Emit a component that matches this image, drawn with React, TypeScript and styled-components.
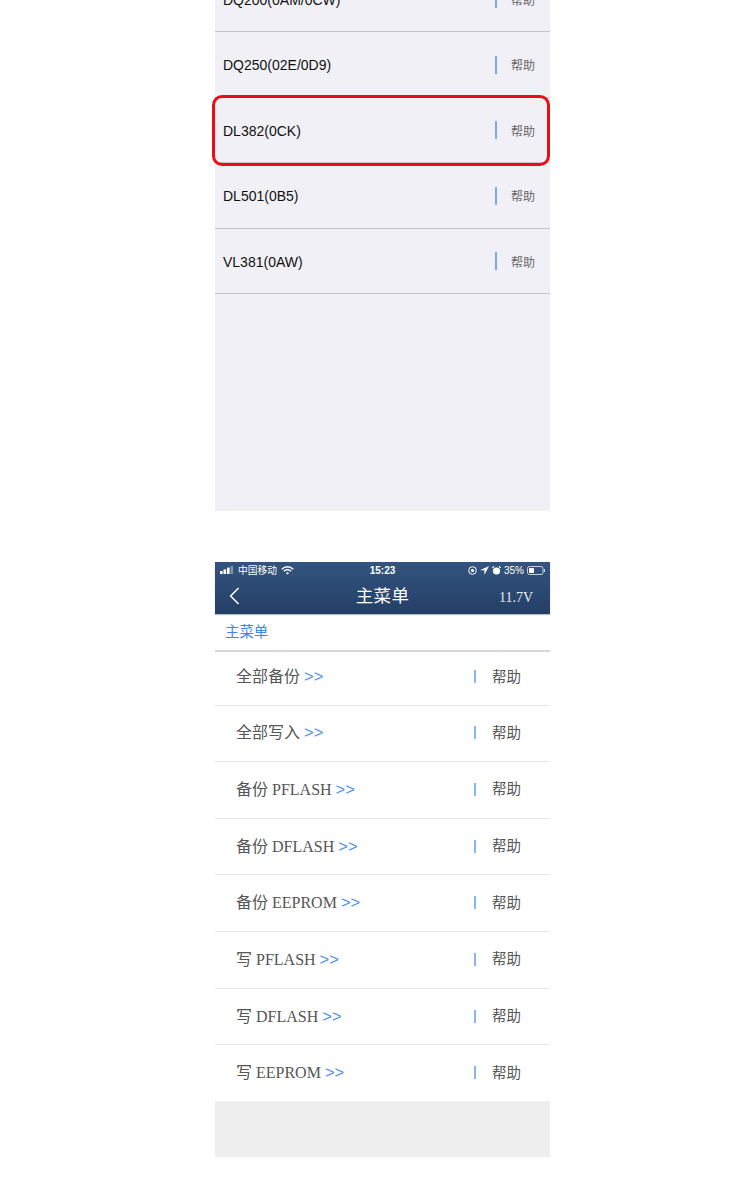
import React from 'react'
import styled, { createGlobalStyle } from 'styled-components'

const GlobalStyle = createGlobalStyle`
  html, body {
    margin: 0;
    padding: 0;
    background: #fff;
  }
  body {
    font-family: "Liberation Sans", "Noto Sans CJK SC", sans-serif;
  }
`

const ecuRows = [
  { name: 'DQ200(0AM/0CW)' },
  { name: 'DQ250(02E/0D9)' },
  { name: 'DL382(0CK)', selected: true },
  { name: 'DL501(0B5)' },
  { name: 'VL381(0AW)' },
]

const menuRows = [
  '全部备份',
  '全部写入',
  '备份 PFLASH',
  '备份 DFLASH',
  '备份 EEPROM',
  '写 PFLASH',
  '写 DFLASH',
  '写 EEPROM',
]

const App = () => {
  return (
    <>
      <GlobalStyle />
      <Page>
        <EcuPanel>
          <EcuList>
            {ecuRows.map((row) => (
              <EcuRow key={row.name} $selected={row.selected}>
                <EcuName>{row.name}</EcuName>
                <EcuDivider />
                <EcuHelp>帮助</EcuHelp>
              </EcuRow>
            ))}
          </EcuList>
        </EcuPanel>

        <Phone>
          <TopBar>
            <StatusBar>
              <StatusSide>
                <svg width="15" height="8" viewBox="0 0 15 8">
                  <rect x="0" y="5" width="2.6" height="3" fill="#fff" />
                  <rect x="3.5" y="3.4" width="2.6" height="4.6" fill="#fff" />
                  <rect x="7" y="1.6" width="2.6" height="6.4" fill="#fff" />
                  <rect x="10.5" y="0" width="2.6" height="8" fill="#7f93ad" />
                </svg>
                <Carrier>中国移动</Carrier>
                <svg width="13" height="9" viewBox="0 0 13 9" fill="none" stroke="#fff" strokeWidth="1.5">
                  <path d="M.8 3.2a8 8 0 0 1 11.4 0" />
                  <path d="M2.9 5.2a5 5 0 0 1 7.2 0" />
                  <path d="M6.5 8.6 4.9 7a2.3 2.3 0 0 1 3.2 0z" fill="#fff" stroke="none" />
                </svg>
              </StatusSide>
              <StatusTime>15:23</StatusTime>
              <StatusRight>
                <svg width="9" height="9" viewBox="0 0 9 9" fill="none" stroke="#fff">
                  <circle cx="4.5" cy="4.5" r="3.8" strokeWidth="1" />
                  <circle cx="4.5" cy="4.5" r="1.6" fill="#fff" stroke="none" />
                </svg>
                <svg width="9" height="9" viewBox="0 0 9 9">
                  <path d="M9 0 0 4.2h4.4V9z" fill="#fff" />
                </svg>
                <svg width="9" height="9" viewBox="0 0 9 9">
                  <circle cx="4.5" cy="5" r="3.6" fill="#fff" />
                  <path d="M.4 2 2 .4M8.6 2 7 .4" stroke="#fff" strokeWidth="1.2" />
                </svg>
                <span>35%</span>
                <svg width="18" height="9" viewBox="0 0 18 9">
                  <rect x=".5" y=".5" width="15.5" height="8" rx="2" fill="none" stroke="#c8d2df" />
                  <rect x="2" y="2" width="5" height="5" rx=".8" fill="#fff" />
                  <rect x="16.8" y="3" width="1.2" height="3" fill="#c8d2df" />
                </svg>
              </StatusRight>
            </StatusBar>
            <NavBar>
              <BackIcon width="11" height="18" viewBox="0 0 11 18" fill="none" stroke="#fff" strokeWidth="1.5">
                <path d="M9.6 1 1.6 9l8 8" />
              </BackIcon>
              <NavTitle>主菜单</NavTitle>
              <Voltage>11.7V</Voltage>
            </NavBar>
          </TopBar>

          <Breadcrumb>主菜单</Breadcrumb>

          <MenuList>
            {menuRows.map((label) => (
              <MenuRow key={label}>
                <MenuLabel>
                  {label} <Chevrons>&gt;&gt;</Chevrons>
                </MenuLabel>
                <MenuDivider />
                <MenuHelp>帮助</MenuHelp>
              </MenuRow>
            ))}
          </MenuList>

          <BottomStrip />
        </Phone>
      </Page>
    </>
  )
}

const Page = styled.div`
  width: 335px;
  margin-left: 215px;
  padding-bottom: 39px;
`

const EcuPanel = styled.section`
  height: 511px;
  background: #f1f0f6;
  margin-bottom: 51px;
  display: flex;
  flex-direction: column;
`

// the first row runs off the top of the screenshot
const EcuList = styled.ul`
  list-style: none;
  margin: -33.5px 0 0;
  padding: 0;
`

const EcuRow = styled.li<{ $selected?: boolean }>`
  height: 65.5px;
  box-sizing: border-box;
  display: flex;
  align-items: center;
  position: relative;
  padding: 1px 15px 0 8px;
  border-bottom: 1.5px solid #c4c4c8;

  ${(p) =>
    p.$selected &&
    `
    &::after {
      content: '';
      position: absolute;
      left: -3px;
      right: 0;
      top: -3px;
      bottom: -3.5px;
      border: 3px solid #ee0c14;
      border-radius: 10px;
    }
  `}
`

const EcuName = styled.span`
  flex: 1;
  font-size: 14px;
  padding-top: 1px;
  color: #111;
`

const EcuDivider = styled.i`
  width: 2px;
  height: 18px;
  background: #7aa6ee;
  margin-right: 14px;
`

const EcuHelp = styled.span`
  font-size: 12px;
  color: #666;
`

const Phone = styled.section`
  height: 595px;
  background: #fff;
  display: flex;
  flex-direction: column;
`

const TopBar = styled.header`
  height: 52px;
  background: linear-gradient(#33547f, #243f66);
  color: #fff;
  box-shadow: 0 1px 1px rgba(0, 0, 0, 0.25);
`

const StatusBar = styled.div`
  height: 16px;
  padding: 0 5px;
  display: grid;
  grid-template-columns: 1fr auto 1fr;
  align-items: center;
  font-size: 10px;
`

const StatusSide = styled.div`
  display: flex;
  align-items: center;
  gap: 4px;
`

const StatusRight = styled(StatusSide)`
  justify-content: flex-end;
  gap: 3px;
`

const Carrier = styled.span`
  font-size: 9.75px;
  margin-left: -1px;
`

const StatusTime = styled.span`
  font-weight: 700;
  font-size: 10px;
`

const NavBar = styled.div`
  height: 36px;
  padding: 0 16px;
  display: grid;
  grid-template-columns: 1fr auto 1fr;
  align-items: center;
`

const BackIcon = styled.svg`
  margin-left: -2px;
`

const NavTitle = styled.span`
  font-size: 17.5px;
  line-height: 1;
  padding-top: 1px;
  letter-spacing: 0.3px;
`

const Voltage = styled.span`
  justify-self: end;
  padding: 3px 1px 0 0;
  font-family: "Liberation Serif", serif;
  font-size: 14px;
  color: #e6ebf2;
`

const Breadcrumb = styled.div`
  height: 38px;
  box-sizing: border-box;
  padding: 10px 10px 0;
  font-size: 14.4px;
  line-height: 17px;
  color: #3d86f5;
  border-bottom: 2px solid #d6d6d6;
`

const MenuList = styled.ul`
  list-style: none;
  margin: 0;
  padding: 0;
  height: 449px;
  display: flex;
  flex-direction: column;
`

const MenuRow = styled.li`
  flex: none;
  height: 56.65px;
  box-sizing: border-box;
  display: flex;
  align-items: center;
  padding: 0 29px 4px 21px;
  font-family: "Liberation Serif", "Noto Sans CJK SC", serif;
  border-bottom: 1px solid #e6e6e6;

  &:first-child {
    height: 53.5px;
    padding-bottom: 6px;
  }

  &:last-child {
    height: 55.65px;
    border-bottom: 0;
  }
`

const MenuLabel = styled.span`
  flex: 1;
  font-size: 16px;
  color: #555;
`

const Chevrons = styled.span`
  font-family: "Liberation Sans", sans-serif;
  color: #4d8ff7;
  font-size: 16.5px;
`

const MenuDivider = styled.i`
  width: 2px;
  height: 13px;
  margin: 3px 16.5px 0 0;
  background: #8db4f2;
`

const MenuHelp = styled.span`
  font-family: "Noto Sans CJK SC", sans-serif;
  font-size: 14.5px;
  color: #555;
`

const BottomStrip = styled.div`
  flex: 1;
  background: #eeeeee;
`

export default App
